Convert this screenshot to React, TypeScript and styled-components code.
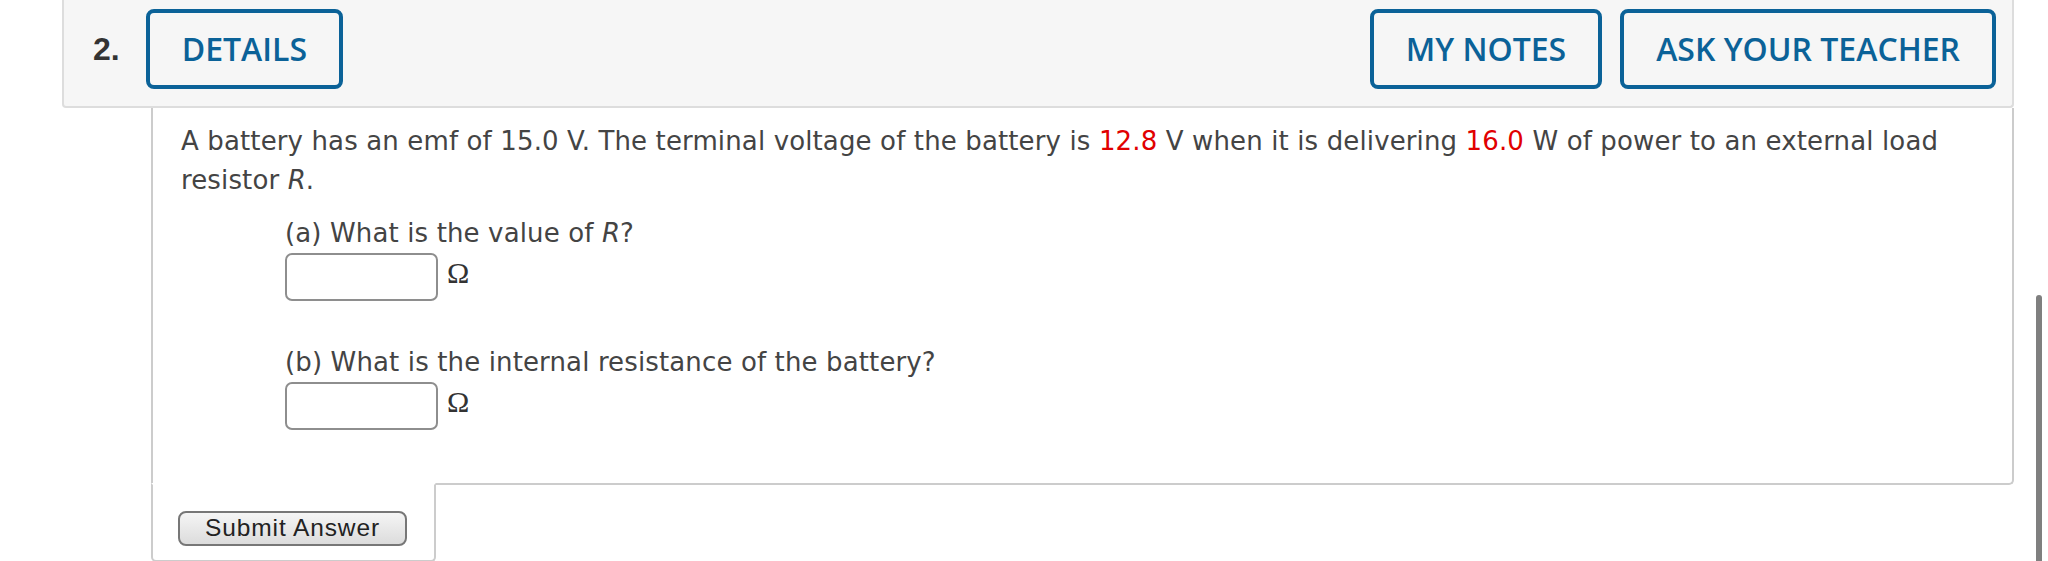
import * as React from "react";
import styled, { createGlobalStyle } from "styled-components";

const GlobalStyle = createGlobalStyle`
  * { box-sizing: border-box; }
  html, body {
    margin: 0;
    padding: 0;
    background: #fff;
  }
  body {
    font-family: "DejaVu Sans", Verdana, sans-serif;
    color: #444;
  }
`;

const Page = styled.div`
  padding-left: 62px;
  width: 2014px;
`;

const Header = styled.header`
  display: flex;
  align-items: center;
  height: 108px;
  padding: 9px 16px 17px 29px;
  background: #f6f6f6;
  border: 2px solid #ddd;
  border-top: none;
  border-radius: 0 0 4px 4px;
`;

const QuestionNumber = styled.div`
  font-family: "Liberation Sans", Arial, sans-serif;
  font-weight: bold;
  font-size: 32px;
  color: #333;
  margin-right: 26px;
`;

const ActionGroup = styled.div`
  display: flex;
  gap: 18px;
  margin-left: auto;
`;

const OutlineButton = styled.button`
  height: 80px;
  padding: 0 32px;
  background: transparent;
  border: 4px solid #0b6298;
  border-radius: 8px;
  color: #0b6298;
  font-family: "Open Sans", "Liberation Sans", sans-serif;
  font-weight: 600;
  font-size: 32px;
  line-height: 1;
  cursor: pointer;
`;

const Card = styled.section`
  margin-left: 89px;
`;

const Content = styled.div`
  border: 2px solid #ccc;
  border-top: none;
  border-bottom-right-radius: 5px;
  padding: 14px 28px 53px 28px;
`;

const Prompt = styled.p`
  margin: 0;
  font-size: 26px;
  line-height: 39px;
  letter-spacing: 0.13px;
`;

const Value = styled.span`
  color: #e10000;
`;

const Parts = styled.div`
  margin-left: 104px;
`;

const Part = styled.div<{ $gap: number }>`
  margin-top: ${(p) => p.$gap}px;
`;

const PartLabel = styled.div`
  font-size: 26px;
  line-height: 39px;
  letter-spacing: 0.13px;
`;

const AnswerRow = styled.div`
  display: flex;
  align-items: flex-start;
`;

const AnswerInput = styled.input`
  width: 153px;
  height: 48px;
  border: 2px solid #8e8e8e;
  border-radius: 7px;
  background: #fff;
  font-size: 24px;
  padding: 0 8px;
  outline: none;
`;

const Unit = styled.span`
  font-family: "Liberation Serif", "Times New Roman", serif;
  font-size: 30px;
  line-height: 33px;
  color: #333;
  margin: 3px 0 0 9px;
`;

const SubmitCell = styled.div`
  width: 285px;
  margin-top: -2px;
  border: 2px solid #ccc;
  border-top-color: #fff;
  border-radius: 0 0 5px 5px;
  padding: 26px 0 14px 25px;
`;

const SubmitButton = styled.button`
  display: block;
  width: 229px;
  height: 35px;
  padding: 0;
  border: 2px solid #777;
  border-radius: 8px;
  background: linear-gradient(#f5f5f5, #dcdcdc);
  color: #222;
  font-family: "Liberation Sans", Arial, sans-serif;
  font-size: 24.5px;
  letter-spacing: 0.9px;
  line-height: 1;
`;

const ScrollThumb = styled.div`
  position: fixed;
  right: 6px;
  top: 295px;
  bottom: -10px;
  width: 6px;
  border-radius: 3px;
  background: #7f7f7f;
`;

const parts = [
  { key: "a", label: <>(a) What is the value of <i>R</i>?</>, gap: 14 },
  { key: "b", label: <>(b) What is the internal resistance of the battery?</>, gap: 42 },
];

const App: React.FC = () => {
  return (
    <>
      <GlobalStyle />
      <Page>
        <Header>
          <QuestionNumber>2.</QuestionNumber>
          <OutlineButton>DETAILS</OutlineButton>
          <ActionGroup>
            <OutlineButton>MY NOTES</OutlineButton>
            <OutlineButton>ASK YOUR TEACHER</OutlineButton>
          </ActionGroup>
        </Header>
        <Card>
          <Content>
            <Prompt>
              A battery has an emf of 15.0 V. The terminal voltage of the battery is{" "}
              <Value>12.8</Value> V when it is delivering <Value>16.0</Value> W of power to
              an external load resistor <i>R</i>.
            </Prompt>
            <Parts>
              {parts.map((part) => (
                <Part key={part.key} $gap={part.gap}>
                  <PartLabel>{part.label}</PartLabel>
                  <AnswerRow>
                    <AnswerInput type="text" />
                    <Unit>Ω</Unit>
                  </AnswerRow>
                </Part>
              ))}
            </Parts>
          </Content>
          <SubmitCell>
            <SubmitButton>Submit Answer</SubmitButton>
          </SubmitCell>
        </Card>
      </Page>
      <ScrollThumb />
    </>
  );
};

export default App;
